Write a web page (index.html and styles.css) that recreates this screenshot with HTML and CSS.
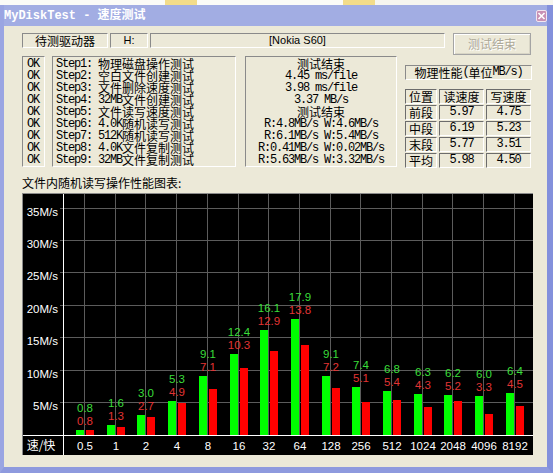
FILE: index.html
```html
<!DOCTYPE html>
<html>
<head>
<meta charset="utf-8">
<title>MyDiskTest - 速度测试</title>
<link rel="stylesheet" href="styles.css">
</head>
<body>
<div class="screen">
  <div class="desk">
    <span class="dk dk1"></span>
    <span class="dk dk2"></span>
    <span class="dk dk3"></span>
    <span class="dk dk4"></span>
  </div>
  <div class="window">
    <div class="titlebar">
      <span class="title">MyDiskTest - 速度测试</span>
      <span class="close"><svg width="9" height="10" viewBox="0 0 9 10"><path d="M1.5 2 L7.5 8 M7.5 2 L1.5 8" stroke="#fff" stroke-width="1.6" fill="none"/></svg></span>
    </div>
    <div class="client">
      <div class="row1">
        <div class="sunk drv">待测驱动器</div>
        <div class="sunk letter">H:</div>
        <div class="sunk name">[Nokia S60]</div>
        <button class="btn" disabled>测试结束</button>
      </div>
      <div class="row2">
        <div class="sunk oks">
          <div class="ln m">OK</div><div class="ln m">OK</div><div class="ln m">OK</div>
          <div class="ln m">OK</div><div class="ln m">OK</div><div class="ln m">OK</div>
          <div class="ln m">OK</div><div class="ln m">OK</div><div class="ln m">OK</div>
        </div>
        <div class="sunk steps">
          <div class="ln"><span class="m">Step1: </span>物理磁盘操作测试</div>
          <div class="ln"><span class="m">Step2: </span>空白文件创建测试</div>
          <div class="ln"><span class="m">Step3: </span>文件删除速度测试</div>
          <div class="ln"><span class="m">Step4: 32MB</span>文件创建测试</div>
          <div class="ln"><span class="m">Step5: </span>文件读写速度测试</div>
          <div class="ln"><span class="m">Step6: 4.0K</span>随机读写测试</div>
          <div class="ln"><span class="m">Step7: 512K</span>随机读写测试</div>
          <div class="ln"><span class="m">Step8: 4.0K</span>文件复制测试</div>
          <div class="ln"><span class="m">Step9: 32MB</span>文件复制测试</div>
        </div>
        <div class="sunk results">
          <div class="ln">测试结束</div>
          <div class="ln m">4.45 ms/file</div>
          <div class="ln m">3.98 ms/file</div>
          <div class="ln m">3.37 MB/s</div>
          <div class="ln">测试结束</div>
          <div class="ln m">R:4.8MB/s W:4.6MB/s</div>
          <div class="ln m">R:6.1MB/s W:5.4MB/s</div>
          <div class="ln m">R:0.41MB/s W:0.02MB/s</div>
          <div class="ln m">R:5.63MB/s W:3.32MB/s</div>
        </div>
        <div class="perf">
          <div class="sunk perf-title">物理性能<span class="m">(</span>单位<span class="m">MB/s)</span></div>
          <div class="perf-table">
            <div class="cell">位置</div><div class="cell">读速度</div><div class="cell">写速度</div>
            <div class="cell">前段</div><div class="cell m">5.97</div><div class="cell m">4.75</div>
            <div class="cell">中段</div><div class="cell m">6.19</div><div class="cell m">5.23</div>
            <div class="cell">末段</div><div class="cell m">5.77</div><div class="cell m">3.51</div>
            <div class="cell">平均</div><div class="cell m">5.98</div><div class="cell m">4.50</div>
          </div>
        </div>
      </div>
      <div class="chart-label">文件内随机读写操作性能图表:</div>
      <div class="chart">
        <svg class="plot" width="510" height="261" viewBox="0 0 510 261">
          <rect x="0" y="0" width="510" height="261" fill="#000"/>
          <g stroke="#5c5c5c" stroke-width="1">
            <line x1="61.5" y1="0" x2="61.5" y2="241"/>
            <line x1="92.5" y1="0" x2="92.5" y2="241"/>
            <line x1="122.5" y1="0" x2="122.5" y2="241"/>
            <line x1="153.5" y1="0" x2="153.5" y2="241"/>
            <line x1="184.5" y1="0" x2="184.5" y2="241"/>
            <line x1="215.5" y1="0" x2="215.5" y2="241"/>
            <line x1="245.5" y1="0" x2="245.5" y2="241"/>
            <line x1="276.5" y1="0" x2="276.5" y2="241"/>
            <line x1="307.5" y1="0" x2="307.5" y2="241"/>
            <line x1="337.5" y1="0" x2="337.5" y2="241"/>
            <line x1="368.5" y1="0" x2="368.5" y2="241"/>
            <line x1="399.5" y1="0" x2="399.5" y2="241"/>
            <line x1="429.5" y1="0" x2="429.5" y2="241"/>
            <line x1="460.5" y1="0" x2="460.5" y2="241"/>
            <line x1="491.5" y1="0" x2="491.5" y2="241"/>
            <line x1="37" y1="208.5" x2="510" y2="208.5"/>
            <line x1="37" y1="176.5" x2="510" y2="176.5"/>
            <line x1="37" y1="143.5" x2="510" y2="143.5"/>
            <line x1="37" y1="111.5" x2="510" y2="111.5"/>
            <line x1="37" y1="78.5" x2="510" y2="78.5"/>
            <line x1="37" y1="46.5" x2="510" y2="46.5"/>
            <line x1="37" y1="14.5" x2="510" y2="14.5"/>
          </g>
          <g stroke="#fff" stroke-width="1">
            <line x1="40.5" y1="0" x2="40.5" y2="261"/>
            <line x1="0" y1="241.5" x2="510" y2="241.5"/>
          </g>
          <g fill="#00ff00">
            <rect x="53" y="236" width="8" height="5"/>
            <rect x="84" y="231" width="8" height="10"/>
            <rect x="114" y="221" width="8" height="20"/>
            <rect x="145" y="207" width="8" height="34"/>
            <rect x="176" y="182" width="8" height="59"/>
            <rect x="207" y="160" width="8" height="81"/>
            <rect x="237" y="136" width="8" height="105"/>
            <rect x="268" y="125" width="8" height="116"/>
            <rect x="299" y="182" width="8" height="59"/>
            <rect x="329" y="193" width="8" height="48"/>
            <rect x="360" y="197" width="8" height="44"/>
            <rect x="391" y="200" width="8" height="41"/>
            <rect x="421" y="201" width="8" height="40"/>
            <rect x="452" y="202" width="8" height="39"/>
            <rect x="483" y="199" width="8" height="42"/>
          </g>
          <g fill="#ff0000">
            <rect x="63" y="236" width="8" height="5"/>
            <rect x="94" y="233" width="8" height="8"/>
            <rect x="124" y="223" width="8" height="18"/>
            <rect x="155" y="209" width="8" height="32"/>
            <rect x="186" y="195" width="8" height="46"/>
            <rect x="217" y="174" width="8" height="67"/>
            <rect x="247" y="157" width="8" height="84"/>
            <rect x="278" y="151" width="8" height="90"/>
            <rect x="309" y="194" width="8" height="47"/>
            <rect x="339" y="208" width="8" height="33"/>
            <rect x="370" y="206" width="8" height="35"/>
            <rect x="401" y="213" width="8" height="28"/>
            <rect x="431" y="207" width="8" height="34"/>
            <rect x="462" y="220" width="8" height="21"/>
            <rect x="493" y="212" width="8" height="29"/>
          </g>
          <g class="vg" text-anchor="middle">
            <text x="62" y="218">0.8</text>
            <text x="93" y="213">1.6</text>
            <text x="123" y="203">3.0</text>
            <text x="154" y="189">5.3</text>
            <text x="185" y="164">9.1</text>
            <text x="216" y="142">12.4</text>
            <text x="246" y="118">16.1</text>
            <text x="277" y="107">17.9</text>
            <text x="308" y="164">9.1</text>
            <text x="338" y="175">7.4</text>
            <text x="369" y="179">6.8</text>
            <text x="400" y="182">6.3</text>
            <text x="430" y="183">6.2</text>
            <text x="461" y="184">6.0</text>
            <text x="492" y="181">6.4</text>
          </g>
          <g class="vr" text-anchor="middle">
            <text x="62" y="231">0.8</text>
            <text x="93" y="226">1.3</text>
            <text x="123" y="216">2.7</text>
            <text x="154" y="202">4.9</text>
            <text x="185" y="177">7.1</text>
            <text x="216" y="155">10.3</text>
            <text x="246" y="131">12.9</text>
            <text x="277" y="120">13.8</text>
            <text x="308" y="177">7.2</text>
            <text x="338" y="188">5.1</text>
            <text x="369" y="192">5.4</text>
            <text x="400" y="195">4.3</text>
            <text x="430" y="196">5.2</text>
            <text x="461" y="197">3.3</text>
            <text x="492" y="194">4.5</text>
          </g>
          <g class="ax" text-anchor="end">
            <text x="35" y="216">5M/s</text>
            <text x="35" y="184">10M/s</text>
            <text x="35" y="151">15M/s</text>
            <text x="35" y="119">20M/s</text>
            <text x="35" y="86">25M/s</text>
            <text x="35" y="54">30M/s</text>
            <text x="35" y="22">35M/s</text>
          </g>
          <g class="ax" text-anchor="middle">
            <text class="cjk" x="18" y="256">速/快</text>
            <text x="62" y="256">0.5</text>
            <text x="93" y="256">1</text>
            <text x="123" y="256">2</text>
            <text x="154" y="256">4</text>
            <text x="185" y="256">8</text>
            <text x="216" y="256">16</text>
            <text x="246" y="256">32</text>
            <text x="277" y="256">64</text>
            <text x="308" y="256">128</text>
            <text x="338" y="256">256</text>
            <text x="369" y="256">512</text>
            <text x="400" y="256">1024</text>
            <text x="430" y="256">2048</text>
            <text x="461" y="256">4096</text>
            <text x="492" y="256">8192</text>
          </g>
        </svg>
      </div>
    </div>
  </div>
</div>
</body>
</html>
```

FILE: styles.css
```css
* { box-sizing: border-box; }
html, body { margin: 0; padding: 0; }
body {
  width: 553px;
  height: 473px;
  overflow: hidden;
  background: #8e9ade;
  font-family: "Noto Sans CJK SC", sans-serif;
  font-size: 12px;
  color: #000;
}
.screen {
  width: 553px;
  height: 473px;
  display: flex;
  flex-direction: column;
}
.desk {
  height: 5px;
  background: #f6f5ef;
  display: flex;
}
.dk { height: 5px; display: block; }
.dk1 { width: 165px; background: #fbfbf7; }
.dk2 { width: 32px; background: #f3dc8a; }
.dk3 { width: 146px; background: #fbfbf7; }
.dk4 { width: 32px; background: #f3dc8a; }

.window {
  flex: 1;
  display: flex;
  flex-direction: column;
  border-left: 4px solid #9aa5e2;
  border-right: 6px solid #8390dc;
  border-bottom: 6px solid #8e9ade;
  background: #ece9d8;
}
.titlebar {
  height: 21px;
  background: #a2ade3;
  display: flex;
  align-items: center;
  justify-content: space-between;
}
.title {
  font-family: "Liberation Mono", "Noto Sans CJK SC", monospace;
  font-weight: bold;
  font-size: 12px;
  color: #fff;
  line-height: 14px;
}
.close {
  width: 11px;
  height: 12px;
  border: 1px solid #f2e6f0;
  border-radius: 2px;
  background: #c890b4;
  display: flex;
  align-items: center;
  justify-content: center;
}
.close svg { display: block; }

.client {
  flex: 1;
  padding: 7px 0 0 18px;
  display: flex;
  flex-direction: column;
}
.m {
  font-family: "Liberation Mono", monospace;
  font-size: 12px;
  letter-spacing: -1.2px;
}
.sunk {
  border-top: 1px solid #8a8a8a;
  border-left: 1px solid #8a8a8a;
  border-right: 1px solid #ffffff;
  border-bottom: 1px solid #ffffff;
}
.row1 {
  height: 22px;
  display: flex;
  align-items: flex-start;
}
.drv, .letter, .name {
  height: 15px;
  line-height: 13px;
  text-align: center;
}
.drv { width: 86px; }
.letter {
  width: 38px;
  margin-left: 2px;
  font-family: "Liberation Sans", sans-serif;
  font-size: 11px;
}
.name {
  width: 295px;
  margin-left: 2px;
  font-family: "Liberation Sans", sans-serif;
  font-size: 11px;
}
.btn {
  width: 78px;
  height: 22px;
  margin: 0 0 0 8px;
  padding: 0;
  background: #ece9d8;
  border: 1px solid #a4a4a4;
  box-shadow: inset 1px 1px 0 #ffffff, inset -1px -1px 0 #d8d5c6;
  font-family: "Noto Sans CJK SC", sans-serif;
  font-size: 12px;
  color: #aca899;
  text-shadow: 1px 1px 0 #ffffff;
  line-height: 18px;
}

.row2 {
  margin-top: 1px;
  height: 111px;
  display: flex;
  align-items: stretch;
}
.ln {
  height: 12px;
  line-height: 12px;
  white-space: nowrap;
  overflow: visible;
}
.ln span { vertical-align: top; line-height: 12px; }
.oks {
  width: 23px;
  padding: 1px 0 0 4px;
}
.steps {
  width: 184px;
  margin-left: 7px;
  padding: 1px 0 0 3px;
}
.results {
  width: 152px;
  margin-left: 9px;
  padding-top: 1px;
  text-align: center;
}
.perf {
  width: 127px;
  margin-left: 8px;
  display: flex;
  flex-direction: column;
}
.perf-title {
  margin-top: 9px;
  height: 15px;
  line-height: 13px;
  text-align: center;
  white-space: nowrap;
}
.perf-title span { vertical-align: top; line-height: 13px; }
.perf-table {
  margin-top: 9px;
  display: grid;
  grid-template-columns: 32px 45px 45px;
  grid-auto-rows: 15px;
  column-gap: 2px;
  row-gap: 1px;
}
.cell {
  border-top: 1px solid #6c6c6c;
  border-left: 1px solid #6c6c6c;
  border-right: 1px solid #ffffff;
  border-bottom: 1px solid #ffffff;
  text-align: center;
  line-height: 13px;
  font-size: 12px;
}
.chart-label {
  margin-top: 9px;
  height: 14px;
  line-height: 14px;
}
.chart {
  margin-top: 3px;
  width: 511px;
  height: 262px;
  border-top: 1px solid #8a8a8a;
  border-left: 1px solid #8a8a8a;
}
.plot {
  display: block;
  font-family: "Liberation Sans", sans-serif;
  font-size: 11.5px;
}
.vg { fill: #3ade3a; }
.vr { fill: #e23434; }
.ax { fill: #ffffff; }
.cjk { font-family: "Noto Sans CJK SC", sans-serif; font-size: 12px; }
```
